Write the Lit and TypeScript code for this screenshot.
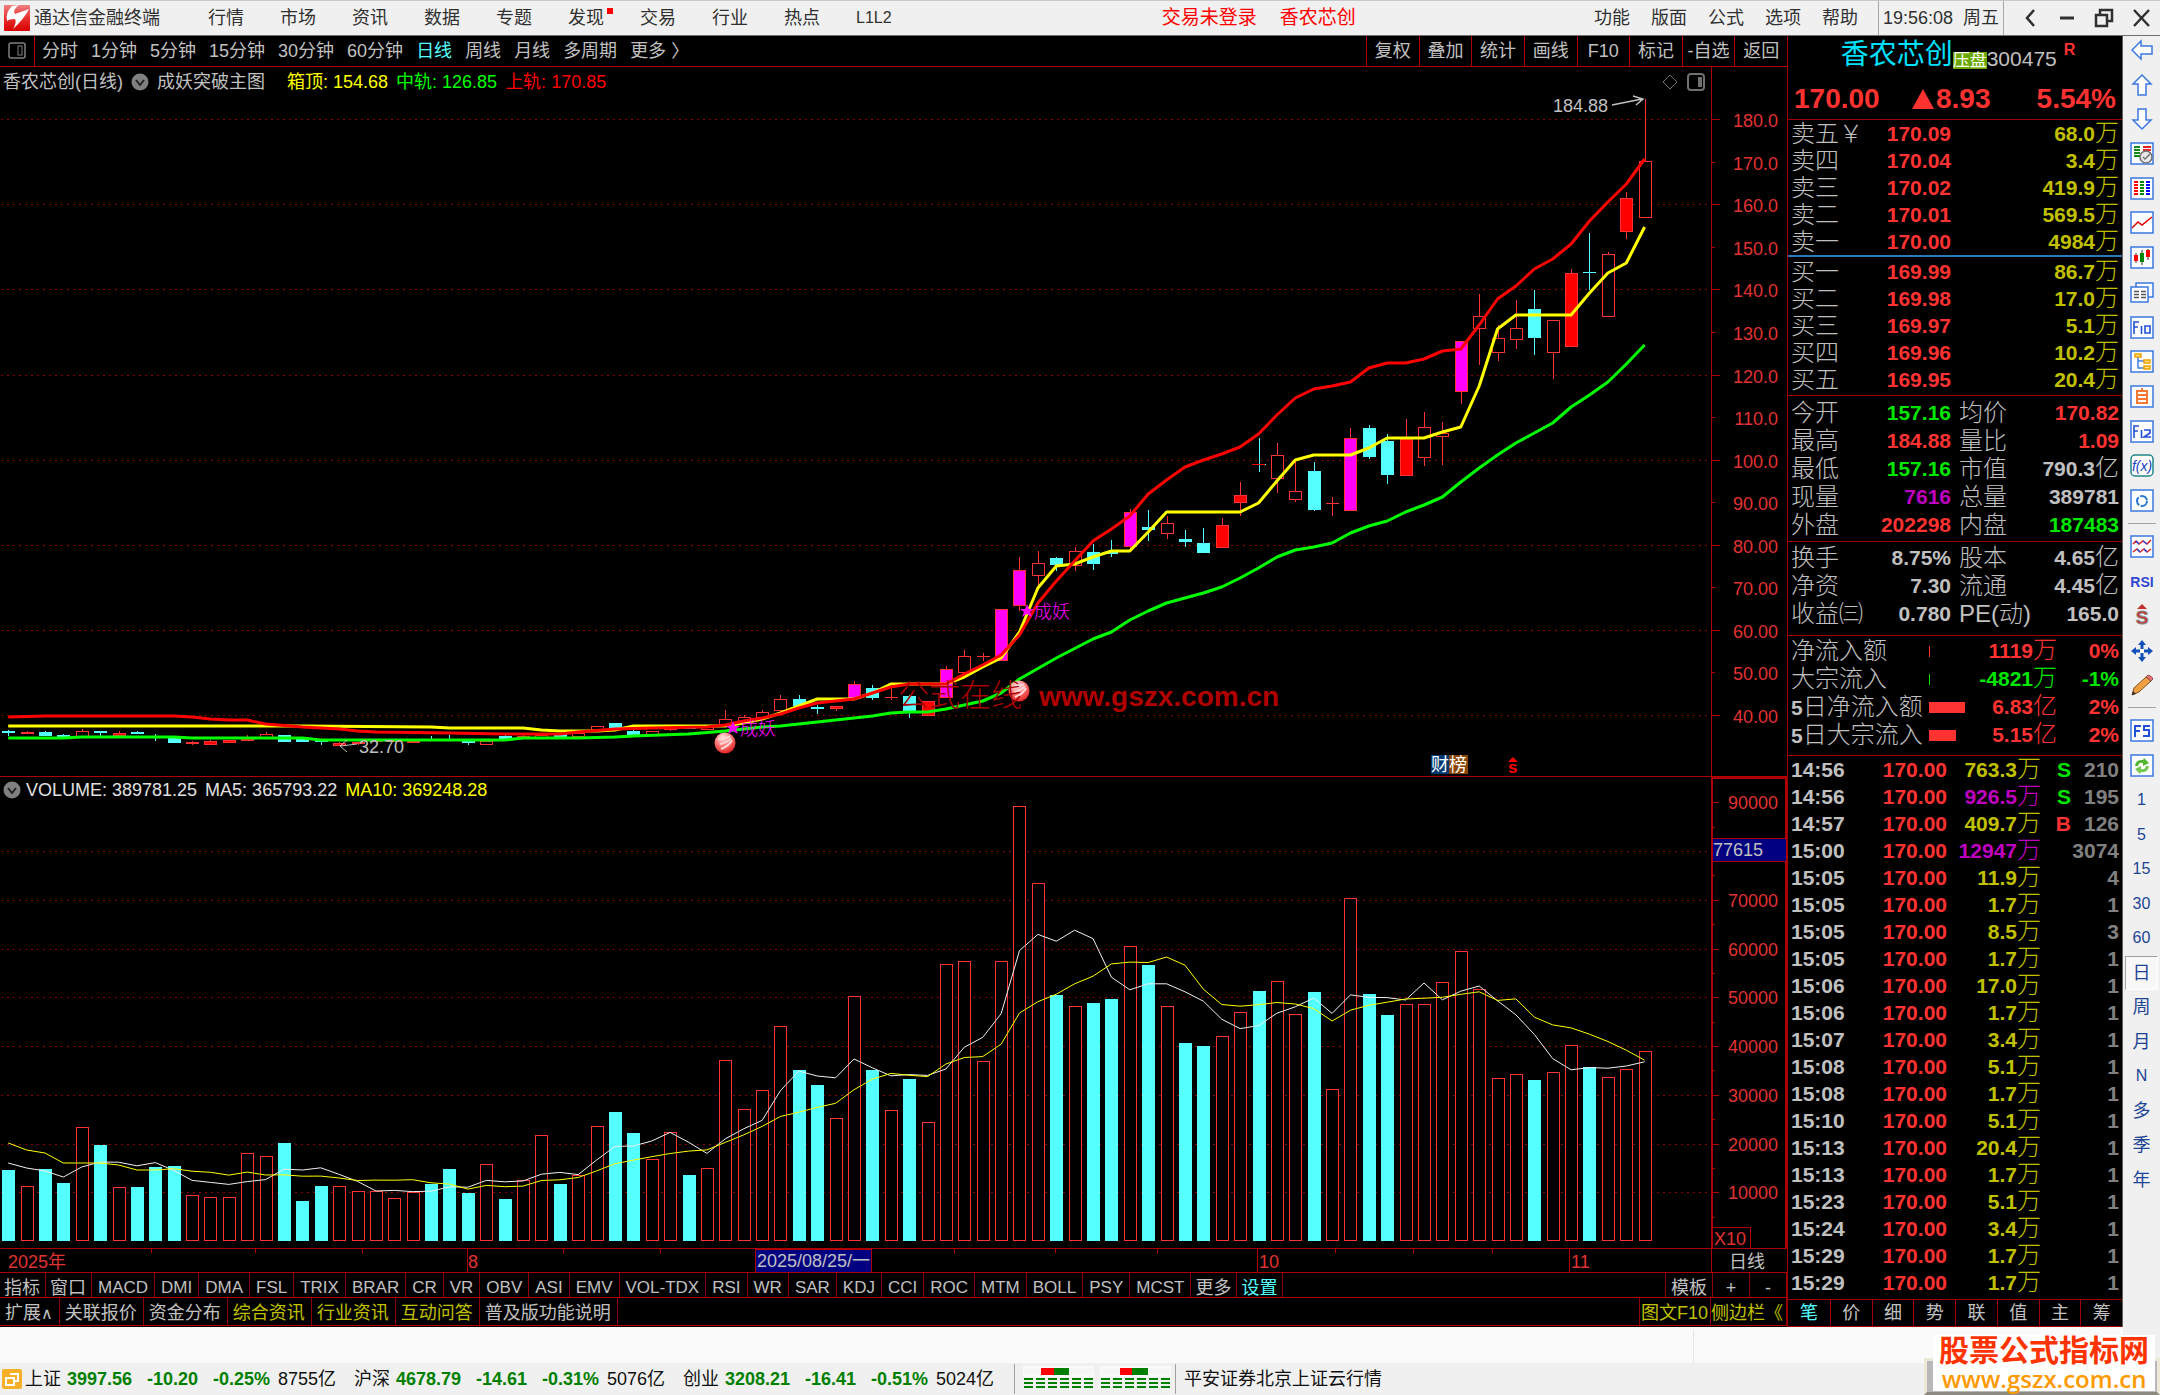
import { LitElement, html, svg, css, nothing } from "lit";
import { customElement, property } from "lit/decorators.js";
import { classMap } from "lit/directives/class-map.js";
import { styleMap } from "lit/directives/style-map.js";

const base = css`
  :host {
    display: block;
    font-family: "Liberation Sans", "Noto Sans CJK SC", sans-serif;
    font-size: 18px;
    line-height: 24px;
    color: #c0c0c0;
    white-space: nowrap;
  }
  * {
    box-sizing: border-box;
  }
  button {
    font: inherit;
    color: inherit;
    background: none;
    border: 0;
    padding: 0;
    margin: 0;
    line-height: inherit;
    white-space: nowrap;
  }
  svg {
    display: block;
  }
  .red { color: #ff3232; }
  .green { color: #00e600; }
  .yellow { color: #c0c000; }
  .cyan { color: #54ffff; }
  .magenta { color: #c000c0; }
  .gray { color: #808080; }
`;

const chartStyles = css`
  .stack { display: grid; }
  .stack > * { grid-area: 1 / 1; }
  .plot { width: 100%; height: auto; }
  .head {
    display: flex;
    align-items: center;
    align-self: start;
    height: 26px;
    z-index: 1;
  }
  .axis { stroke: #b00000; fill: none; shape-rendering: crispEdges; }
  .dots { stroke: #900000; stroke-dasharray: 2 4; shape-rendering: crispEdges; }
  .label { fill: #e03232; font-size: 18px; }
  .plain { fill: #c0c0c0; font-size: 18px; }
  .crisp { shape-rendering: crispEdges; }
  .trend { fill: none; stroke-width: 3; stroke-linejoin: round; }
  .thin { fill: none; stroke-width: 1; }
  .toggle { width: 18px; height: 18px; flex: none; }
`;

const STEP = 18.387;
const FIRST = 8.2;
const AXIS_X = 1711;
const barX = (i: number) => FIRST + i * STEP;

type Kind = "C" | "R" | "F" | "M";
/* kind, high, body top, body bottom, low; in chart units from the top of the window */
type Candle = [Kind, number, number, number, number];

const CANDLES: Candle[] = [
  ["C", 730, 731, 732, 735], ["F", 731, 732, 733, 733], ["C", 731, 732, 735, 735], ["C", 734, 735, 737, 737],
  ["R", 729, 731, 737, 737], ["C", 731, 731, 732, 735], ["F", 731, 733, 735, 735], ["C", 731, 732, 733, 733],
  ["C", 734, 736, 737, 740], ["C", 738, 738, 742, 742], ["F", 741, 742, 743, 744], ["F", 740, 741, 744, 744],
  ["F", 740, 740, 742, 742], ["F", 735, 738, 740, 740], ["R", 732, 734, 737, 737], ["C", 735, 735, 741, 741],
  ["C", 738, 738, 741, 741], ["C", 740, 740, 741, 744], ["F", 742, 743, 745, 745], ["F", 740, 742, 743, 744],
  ["F", 739, 739, 741, 741], ["F", 739, 740, 741, 741], ["F", 739, 741, 742, 742], ["C", 736, 739, 740, 740],
  ["C", 735, 739, 740, 740], ["C", 740, 741, 742, 744], ["R", 740, 741, 744, 744], ["C", 735, 736, 739, 739],
  ["R", 735, 736, 738, 738], ["R", 735, 735, 737, 737], ["C", 733, 734, 737, 737], ["R", 733, 733, 736, 736],
  ["R", 726, 726, 730, 730], ["C", 723, 723, 729, 729], ["C", 730, 731, 734, 734], ["R", 731, 731, 734, 734],
  ["F", 728, 728, 729, 730], ["C", 727, 727, 728, 728], ["R", 727, 727, 729, 729], ["R", 710, 719, 725, 725],
  ["R", 715, 717, 722, 722], ["R", 710, 712, 717, 717], ["R", 695, 699, 710, 710], ["C", 695, 699, 705, 705],
  ["C", 705, 707, 708, 713], ["F", 706, 706, 708, 710], ["M", 681, 684, 698, 698], ["C", 685, 688, 697, 699],
  ["F", 688, 697, 697, 699], ["C", 695, 696, 712, 717], ["F", 701, 701, 715, 715], ["M", 666, 669, 697, 697],
  ["R", 650, 656, 672, 672], ["F", 653, 656, 656, 660], ["M", 609, 609, 660, 660], ["M", 557, 570, 605, 610],
  ["R", 551, 563, 575, 588], ["C", 557, 558, 564, 570], ["R", 547, 551, 565, 570], ["C", 544, 552, 563, 569],
  ["C", 540, 552, 553, 556], ["M", 509, 512, 546, 548], ["C", 510, 527, 529, 540], ["R", 516, 523, 533, 538],
  ["C", 530, 539, 541, 546], ["C", 528, 543, 552, 552], ["F", 518, 525, 547, 547], ["F", 482, 495, 502, 515],
  ["C", 438, 464, 464, 471], ["R", 443, 455, 478, 492], ["R", 460, 491, 499, 501], ["C", 462, 471, 509, 510],
  ["F", 497, 503, 503, 515], ["M", 428, 438, 510, 510], ["C", 425, 428, 456, 458], ["C", 434, 441, 474, 483],
  ["F", 419, 438, 475, 475], ["R", 412, 427, 457, 465], ["R", 422, 433, 436, 464], ["M", 341, 341, 391, 403],
  ["R", 294, 316, 328, 364], ["R", 325, 338, 352, 360], ["R", 300, 328, 339, 348], ["C", 290, 309, 337, 354],
  ["R", 320, 320, 352, 378], ["F", 269, 273, 346, 346], ["C", 233, 272, 272, 289], ["R", 252, 254, 316, 316],
  ["F", 192, 198, 231, 238], ["R", 99, 161, 217, 217],
];

/* [bar index, level] knots of the three overlay lines */
const UPPER: [number, number][] = [
  [0, 717], [2, 716], [9, 716], [10, 717], [11, 719], [12, 720], [13, 720], [14, 724], [16, 727], [18, 729],
  [19, 731], [20, 732], [24, 733], [27, 734], [30, 734], [31, 732], [33, 729], [35, 728], [38, 727], [39, 725],
  [40, 721], [41, 718], [42, 714], [43, 708], [44, 703], [45, 701], [46, 699], [47, 693], [48, 687], [49, 684],
  [51, 684], [52, 674], [53, 665], [54, 655], [55, 635], [56, 603], [57, 581], [58, 561], [59, 541], [60, 529],
  [61, 516], [62, 494], [63, 480], [64, 467], [65, 460], [66, 454], [67, 447], [68, 434], [69, 415], [70, 398],
  [71, 389], [72, 386], [73, 382], [74, 368], [75, 363], [76, 363], [77, 359], [78, 351], [79, 349], [80, 325],
  [81, 299], [82, 286], [83, 269], [84, 259], [85, 244], [86, 221], [87, 202], [88, 184], [89, 159],
];
const BOX: [number, number][] = [
  [0, 726], [16, 726], [23, 727], [24, 728], [28, 728], [29, 730], [30, 731], [32, 731], [33, 730], [34, 726],
  [39, 726], [40, 723], [41, 719], [42, 713], [43, 706], [44, 699], [46, 699], [47, 693], [48, 684], [51, 684],
  [52, 677], [53, 667], [54, 658], [55, 632], [56, 588], [57, 566], [58, 564], [59, 557], [60, 551], [61, 551],
  [62, 532], [63, 512], [67, 512], [68, 503], [69, 481], [70, 460], [71, 455], [73, 455], [74, 448], [75, 438],
  [77, 438], [78, 432], [79, 427], [80, 386], [81, 329], [82, 315], [85, 315], [86, 293], [87, 273], [88, 263],
  [89, 227],
];
const MIDDLE: [number, number][] = [
  [0, 738], [3, 738], [4, 737], [9, 737], [10, 738], [16, 738], [17, 740], [27, 740], [28, 738], [31, 738],
  [33, 737], [34, 736], [37, 734], [39, 731], [40, 729], [41, 727], [42, 726], [43, 724], [44, 722], [45, 720],
  [46, 718], [47, 716], [48, 713], [49, 712], [50, 712], [51, 709], [52, 705], [53, 701], [54, 693], [55, 679],
  [57, 658], [59, 639], [60, 632], [61, 620], [62, 611], [63, 603], [65, 593], [66, 587], [67, 578], [68, 568],
  [69, 557], [70, 550], [71, 547], [72, 543], [73, 533], [74, 526], [75, 521], [76, 512], [77, 505], [78, 497],
  [79, 482], [80, 468], [81, 455], [82, 443], [83, 433], [84, 423], [85, 407], [86, 395], [87, 382], [88, 364],
  [89, 345],
];

const VOLUMES = [
  71, 55, 72, 58, 114, 96, 54, 54, 74, 75, 46, 44, 44, 88, 85, 98, 40, 55, 55, 50, 50, 43, 49, 57, 72, 48, 77, 42,
  61, 106, 57, 66, 115, 129, 108, 82, 109, 66, 73, 181, 132, 151, 215, 171, 156, 123, 245, 171, 131, 162, 119, 277,
  280, 180, 280, 435, 358, 246, 235, 238, 242, 295, 276, 235, 198, 195, 205, 229, 250, 260, 227, 249, 152, 343, 247,
  226, 237, 237, 259, 290, 252, 163, 167, 161, 169, 196, 174, 164, 172, 190,
];
const LEAD5 = [78, 73, 70, 64];
const LEAD10 = [98, 91, 88, 78, 78, 78, 76, 71, 71];

const average = (n: number, lead: number[]) =>
  VOLUMES.map((_, i) => (i < n - 1 ? lead[i] : VOLUMES.slice(i - n + 1, i + 1).reduce((a, b) => a + b, 0) / n));

const line = (pts: [number, number][]) => pts.map(([i, y]) => `${barX(i).toFixed(1)},${y.toFixed(1)}`).join(" ");

const toggleIcon = html`<svg class="toggle" viewBox="0 0 18 18" aria-hidden="true">
  <circle cx="9" cy="9" r="8.5" fill="#808080" />
  <path d="M5 7l4 5 4-5" fill="none" stroke="#202020" stroke-width="2" />
</svg>`;

@customElement("price-chart")
export class PriceChart extends LitElement {
  static styles = [
    base,
    chartStyles,
    css`
      .head { padding: 3px 82px 0 3px; gap: 8px; }
      .box { color: #ffff00; margin-left: 14px; }
      .mid { color: #00ff00; }
      .up { color: #ff0000; }
      .tools { margin-left: auto; display: flex; gap: 8px; }
      .stamp { fill: #a80000; font-size: 31px; font-family: "Liberation Serif", "Noto Sans CJK SC", serif; font-weight: 300; }
      .site { fill: #b00000; font-size: 28px; font-weight: 700; }
      .omen { fill: #ff00ff; font-size: 18px; font-weight: 300; }
      .badge { fill: #ffffff; font-size: 18px; }
      .dollar { fill: #ff0000; font-size: 17px; font-weight: 700; }
    `,
  ];

  private candle([kind, high, top, bottom, low]: Candle, i: number) {
    const cx = Math.round(barX(i));
    const stroke = kind === "C" ? "#54ffff" : "#ff3232";
    const fill = { C: "#54ffff", R: "#000000", F: "#ff0000", M: "#ff00ff" }[kind];
    return svg`
      <rect x=${cx} y=${high} width="1" height=${low - high + 1} fill=${stroke} />
      ${bottom === top
        ? svg`<rect x=${cx - 6} y=${top} width="13" height="1" fill=${stroke} />`
        : svg`<rect x=${cx - 5.5} y=${top + 0.5} width="12" height=${bottom - top} fill=${fill} stroke=${stroke} />`}`;
  }

  private ball(x: number, y: number) {
    return svg`
      <circle cx=${x} cy=${y} r="10.5" fill="url(#ball)" />
      <path d="M${x - 7} ${y - 4}q8 0 12-3M${x - 5} ${y + 1}q7-1 11-6M${x - 4} ${y + 6}q8-3 11-9"
        fill="none" stroke="#ffd8d8" stroke-width="2" />`;
  }

  private omen(x: number, y: number) {
    return svg`
      <path transform="translate(${x} ${y})" fill="#ff00ff" d="M0-7L2-2L7-2L3 1L5 6L0 3L-5 6L-3 1L-7-2L-2-2Z" />
      <text class="omen" x=${x + 7} y=${y + 7}>成妖</text>`;
  }

  render() {
    const level = (p: number) => Math.round(119.3 + (180 - p) * 4.254);
    const marks = Array.from({ length: 15 }, (_, k) => 180 - k * 10);
    return html`<div class="stack">
      <div class="head">
        <span>香农芯创(日线)</span>${toggleIcon}<span>成妖突破主图</span>
        <span class="box">箱顶: 154.68</span><span class="mid">中轨: 126.85</span><span class="up">上轨: 170.85</span>
        <span class="tools">
          <svg width="18" height="18" viewBox="0 0 18 18"><path d="M9 2l7 7-7 7-7-7z" fill="none" stroke="#707070" /></svg>
          <svg width="18" height="18" viewBox="0 0 18 18">
            <rect x="1" y="1" width="16" height="16" rx="3" fill="none" stroke="#707070" stroke-width="2" />
            <rect x="11" y="4" width="4" height="10" fill="#707070" />
          </svg>
        </span>
      </div>
      <svg class="plot" viewBox="0 67 1787 710" role="img" aria-label="日线">
        <defs>
          <radialGradient id="ball" cx="0.4" cy="0.25" r="0.8">
            <stop offset="0" stop-color="#ffe8e8" /><stop offset="0.45" stop-color="#ff8080" />
            <stop offset="1" stop-color="#e01818" />
          </radialGradient>
        </defs>
        ${marks.filter((p) => p % 20 === 0).map((p) => svg`<line class="dots" x1="1" x2=${AXIS_X} y1=${level(p) + 0.5} y2=${level(p) + 0.5} />`)}
        <g class="axis">
          <path d="M${AXIS_X}.5 67V777" />
          ${marks.map((p) => svg`<path d="M${AXIS_X} ${level(p)}.5h${p % 20 ? 4 : 9}" />`)}
        </g>
        ${marks.map((p) => svg`<text class="label" text-anchor="end" x="1778" y=${level(p) + 8}>${p >= 100 ? p.toFixed(1) : p.toFixed(2)}</text>`)}
        <g class="crisp">${CANDLES.map((c, i) => this.candle(c, i))}
          <rect x="1252" y="464" width="13" height="1" fill="#ff0000" />
        </g>
        <polyline class="trend" stroke="#ffff00" points=${line(BOX)} />
        <polyline class="trend" stroke="#ff0000" points=${line(UPPER)} />
        <polyline class="trend" stroke="#00ff00" points=${line(MIDDLE)} />
        ${this.ball(725, 743)} ${this.ball(1019, 691)} ${this.omen(733, 728)} ${this.omen(1027, 611)}
        <text class="stamp" x="898" y="706">公式在线</text>
        <text class="site" x="1039" y="706">www.gszx.com.cn</text>
        <text class="plain" x="359" y="753">32.70</text>
        <path d="M357 744L341 746M347 740L340 746L347 752" fill="none" stroke="#c0c0c0" />
        <text class="plain" x="1553" y="112">184.88</text>
        <path d="M1612 105L1642 99M1633 96L1643 99L1636 105" fill="none" stroke="#c0c0c0" stroke-width="1.5" />
        <rect x="1431" y="755" width="18" height="19" fill="#003870" />
        <rect x="1449" y="755" width="19" height="19" fill="#884400" />
        <text class="badge" x="1431" y="771">财榜</text>
        <path d="M1508 762l5-5 5 5z" fill="#ff0000" />
        <text class="dollar" x="1508" y="773">s</text>
        <path class="axis" d="M0 776.5H1787" />
      </svg>
    </div>`;
  }
}

@customElement("volume-chart")
export class VolumeChart extends LitElement {
  static styles = [
    base,
    chartStyles,
    css`
      .head { padding: 0 3px; gap: 5px; color: #e0e0e0; }
      .ten { color: #ffff00; margin-left: 3px; }
      .five { margin-left: 3px; }
    `,
  ];

  render() {
    const level = (v: number) => Math.round(1241 - v * 48.75);
    const grid = [1, 2, 3, 4, 5, 6, 7, 8];
    const ma = (n: number, lead: number[]) => line(average(n, lead).map((v, i) => [i, 1241 - v]));
    return html`<div class="stack">
      <div class="head">
        ${toggleIcon}<span>VOLUME: 389781.25</span><span class="five">MA5: 365793.22</span>
        <span class="ten">MA10: 369248.28</span>
      </div>
      <svg class="plot" viewBox="0 777 1787 472" role="img" aria-label="VOLUME">
        ${grid.map((v) => svg`<line class="dots" x1="1" x2=${AXIS_X} y1=${level(v) + 0.5} y2=${level(v) + 0.5} />`)}
        <g class="axis">
          <path stroke-width="2" d="M${AXIS_X + 1} 777V1248M1786 777V1248M1711 778H1787M0 1249H1787" />
          ${[...grid, 9].map((v) => svg`<path d="M${AXIS_X} ${level(v)}.5h8M${AXIS_X} ${level(v - 0.5)}.5h4" />`)}
          <path d="M1712 1227.5h38.5V1249" />
        </g>
        ${[...grid, 9].filter((v) => v !== 8).map((v) => svg`<text class="label" text-anchor="end" x="1778" y=${level(v) + 7}>${v * 10000}</text>`)}
        <rect class="crisp" x="1712" y="838.5" width="74" height="23" fill="#000080" stroke="#b00000" />
        <text class="plain" x="1713" y="856">77615</text>
        <text class="label" x="1714" y="1245">X10</text>
        <g class="crisp">
          ${VOLUMES.map((v, i) => {
            const x = Math.round(barX(i)) - 6;
            return CANDLES[i][0] === "C"
              ? svg`<rect x=${x} y=${1241 - v} width="13" height=${v} fill="#54ffff" />`
              : svg`<rect x=${x + 0.5} y=${1241.5 - v} width="12" height=${v - 1} fill="#000000" stroke="#ff3232" />`;
          })}
        </g>
        <polyline class="thin" stroke="#f0f0f0" points=${ma(5, LEAD5)} />
        <polyline class="thin" stroke="#ffff00" points=${ma(10, LEAD10)} />
      </svg>
    </div>`;
  }
}

@customElement("date-axis")
export class DateAxis extends LitElement {
  static styles = [base, chartStyles];
  render() {
    const minor = [151, 255, 362, 563, 660, 954, 1055, 1157, 1335, 1413, 1492];
    return html`<svg class="plot" viewBox="0 0 1787 24" role="img" aria-label="日期">
      <g class="axis">
        <path d="M467.5 0V24M1257.5 0V24M1569.5 0V24M${AXIS_X}.5 0V24M0 23.5H1787" />
        ${minor.map((x) => svg`<path d="M${x}.5 0v4" />`)}
      </g>
      <rect class="crisp" x="755.5" y="0.5" width="116" height="23" fill="#000080" stroke="#b00000" />
      <text class="label" x="8" y="19">2025年</text>
      <text class="label" x="468" y="19">8</text>
      <text class="plain" x="757" y="18">2025/08/25/一</text>
      <text class="label" x="1259" y="19">10</text>
      <text class="label" x="1571" y="19">11</text>
      <text class="plain" x="1747" y="19" text-anchor="middle">日线</text>
    </svg>`;
  }
}

const SELL = [["卖五￥", "170.09", "68.0"], ["卖四", "170.04", "3.4"], ["卖三", "170.02", "419.9"], ["卖二", "170.01", "569.5"], ["卖一", "170.00", "4984"]];
const BUY = [["买一", "169.99", "86.7"], ["买二", "169.98", "17.0"], ["买三", "169.97", "5.1"], ["买四", "169.96", "10.2"], ["买五", "169.95", "20.4"]];
const DAY = [
  ["今开", "157.16", "green", "均价", "170.82", "red"],
  ["最高", "184.88", "red", "量比", "1.09", "red"],
  ["最低", "157.16", "green", "市值", "790.3亿", ""],
  ["现量", "7616", "magenta", "总量", "389781", ""],
  ["外盘", "202298", "red", "内盘", "187483", "green"],
];
const BASICS = [
  ["换手", "8.75%", "", "股本", "4.65亿", ""],
  ["净资", "7.30", "", "流通", "4.45亿", ""],
  ["收益㈢", "0.780", "", "PE(动)", "165.0", ""],
];
const FLOWS: [string, number, string, string, string][] = [
  ["净流入额", 1, "1119万", "0%", "red"],
  ["大宗流入", 1, "-4821万", "-1%", "green"],
  ["5日净流入额", 36, "6.83亿", "2%", "red"],
  ["5日大宗流入", 27, "5.15亿", "2%", "red"],
];
const TICKS: [string, string, string, string, string][] = [
  ["14:56", "763.3", "yellow", "S", "210"], ["14:56", "926.5", "magenta", "S", "195"],
  ["14:57", "409.7", "yellow", "B", "126"], ["15:00", "12947", "magenta", "", "3074"],
  ["15:05", "11.9", "yellow", "", "4"], ["15:05", "1.7", "yellow", "", "1"],
  ["15:05", "8.5", "yellow", "", "3"], ["15:05", "1.7", "yellow", "", "1"],
  ["15:06", "17.0", "yellow", "", "1"], ["15:06", "1.7", "yellow", "", "1"],
  ["15:07", "3.4", "yellow", "", "1"], ["15:08", "5.1", "yellow", "", "1"],
  ["15:08", "1.7", "yellow", "", "1"], ["15:10", "5.1", "yellow", "", "1"],
  ["15:13", "20.4", "yellow", "", "1"], ["15:13", "1.7", "yellow", "", "1"],
  ["15:23", "5.1", "yellow", "", "1"], ["15:24", "3.4", "yellow", "", "1"],
  ["15:29", "1.7", "yellow", "", "1"], ["15:29", "1.7", "yellow", "", "1"],
];

/* Splits a figure from its trailing 万 / 亿 unit so the unit keeps the lighter weight. */
const figure = (t: string) => {
  const m = /^(.*?)([万亿]?)$/.exec(t)!;
  return html`<b>${m[1]}</b>${m[2] ? html`<i>${m[2]}</i>` : nothing}`;
};

@customElement("quote-panel")
export class QuotePanel extends LitElement {
  static styles = [
    base,
    css`
      :host {
        display: flex;
        flex-direction: column;
        border-left: 1px solid #a00000;
        border-right: 1px solid #606060;
        background: #000;
        font-size: 21px;
      }
      .name { display: flex; justify-content: center; align-items: flex-start; height: 42px; padding-left: 6px; }
      .title { color: #00e0ff; font-size: 28px; line-height: 38px; }
      .tag { background: #6aa800; color: #fff; font-size: 17px; line-height: 17px; margin-top: 16px; }
      .code { line-height: 46px; }
      .flag { font-size: 16px; font-weight: 700; line-height: 28px; margin-left: 7px; }
      .price { display: grid; grid-template-columns: 118px 1fr auto; align-items: center; height: 41px; padding: 0 6px; font-size: 28px; font-weight: 700; }
      .up { display: flex; align-items: center; gap: 2px; }
      table { border-collapse: collapse; width: 100%; table-layout: fixed; }
      td, th { padding: 0; height: 27px; line-height: 27px; text-align: right; font-weight: 400; }
      .tall td, .tall th { height: 28px; line-height: 28px; }
      th, i { font-size: 24px; font-weight: 300; font-style: normal; }
      th { text-align: left; }
      b { font-weight: 700; }
      b, i, .num { line-height: 0; }
      section { border-top: 1px solid #a00000; padding: 0 3px; }
      .buys { border-top: 2px solid #2a78b8; padding-top: 1px; padding-bottom: 2px; }
      .day { padding-top: 3px; padding-bottom: 2px; }
      .basics { padding-top: 2px; padding-bottom: 7px; }
      .flows { padding-top: 1px; padding-bottom: 6px; }
      .ticks { flex: 1; padding-bottom: 3px; }
      .second { padding-left: 8px; }
      .num { font-size: 21px; font-weight: 700; }
      .tone { color: #c0c0c0; }
      .bar { display: block; height: 11px; background: currentColor; }
      .time { text-align: left; font-weight: 700; }
      .side { font-weight: 700; text-align: right; }
      .views { display: grid; grid-template-columns: repeat(8, 1fr); height: 28px; border-top: 1px solid #a00000; border-bottom: 1px solid #a00000; font-size: 18px; }
      .views button + button { border-left: 1px solid #a00000; }
      .c-label { width: 75px; }
      .c-first { width: 85px; }
      .c-pair { width: 76px; }
      .c-flow { width: 138px; }
      .c-bar { width: 40px; }
      .c-pct { width: 62px; }
      .c-time { width: 60px; }
      .c-deal { width: 96px; }
      .c-amount { width: 94px; }
      .c-side { width: 30px; }
    `,
  ];

  private book(rows: string[][]) {
    return html`<table>
      <colgroup><col class="c-label" /><col class="c-first" /><col /></colgroup>
      ${rows.map(([n, p, v]) => html`<tr><th scope="row">${n}</th><td class="red"><b>${p}</b></td><td class="yellow">${figure(v + "万")}</td></tr>`)}
    </table>`;
  }

  private pairs(rows: string[][]) {
    return html`<table class="tall">
      <colgroup><col class="c-label" /><col class="c-first" /><col class="c-pair" /><col /></colgroup>
      ${rows.map(([a, b, c, d, e, f]) => html`<tr><th scope="row">${a}</th><td class=${c}>${figure(b)}</td><th scope="row" class="second">${d}</th><td class=${f}>${figure(e)}</td></tr>`)}
    </table>`;
  }

  render() {
    return html`
      <div class="name">
        <span class="title">香农芯创</span><span class="tag">压盘</span><span class="code">300475</span><span class="flag red">R</span>
      </div>
      <div class="price red">
        <span>170.00</span>
        <span class="up"><svg width="22" height="20" viewBox="0 0 22 20"><path d="M11 0L22 20H0z" fill="currentColor" /></svg>8.93</span>
        <span>5.54%</span>
      </div>
      <section>${this.book(SELL)}</section>
      <section class="buys">${this.book(BUY)}</section>
      <section class="day">${this.pairs(DAY)}</section>
      <section class="basics">${this.pairs(BASICS)}</section>
      <section class="flows">
        <table class="tall">
          <colgroup><col class="c-flow" /><col class="c-bar" /><col /><col class="c-pct" /></colgroup>
          ${FLOWS.map(([n, w, v, p, c]) => html`<tr class=${c}>
            <th scope="row" class="tone">${n.startsWith("5") ? html`<span class="num">5</span>${n.slice(1)}` : n}</th>
            <td><span class="bar" style=${styleMap({ width: `${w}px` })}></span></td>
            <td>${figure(v)}</td><td><b>${p}</b></td>
          </tr>`)}
        </table>
      </section>
      <section class="ticks">
        <table>
          <colgroup><col class="c-time" /><col class="c-deal" /><col class="c-amount" /><col class="c-side" /><col /></colgroup>
          ${TICKS.map(([t, v, c, s, n]) => html`<tr>
            <td class="time">${t}</td><td class="red"><b>170.00</b></td><td class=${c}>${figure(v + "万")}</td>
            <td class="side ${s === "S" ? "green" : "red"}">${s}</td><td class="gray"><b>${n}</b></td>
          </tr>`)}
        </table>
      </section>
      <div class="views">
        ${[..."笔价细势联值主筹"].map((t, i) => html`<button class=${classMap({ cyan: i === 0 })}>${t}</button>`)}
      </div>`;
  }
}

const framed = (inner: unknown, stroke = "#3c78e0") => svg`<rect x="1" y="1" width="22" height="21" fill="#fff" stroke=${stroke} stroke-width="1.5" />${inner}`;
const arrow = (deg: number) => svg`<path transform="rotate(${deg} 12 12)" d="M2 12L11 3V8H22V16H11V21Z" fill="#fff" stroke="#3c78e0" stroke-width="1.5" />`;
const dashes = (x: number, w: number, color: string, rows: number[]) => rows.map((y) => svg`<rect x=${x} y=${y} width=${w} height="2" fill=${color} />`);
const FIVE = [4, 7, 10, 13, 16];

const TOP_ICONS: [string, unknown][] = [
  ["返回", arrow(0)],
  ["向上", arrow(90)],
  ["向下", arrow(-90)],
  ["报价", framed([dashes(4, 6, "#108a10", [4, 7, 10, 13]), dashes(13, 8, "#e82020", [4, 7, 10]), svg`<circle cx="16" cy="15" r="6" fill="#e8e8e8" stroke="#707070" stroke-width="1.5" /><path d="M13 15l2 2 5-5" fill="none" stroke="#707070" stroke-width="1.5" />`])],
  ["列表", framed([dashes(4, 4, "#f00", FIVE), dashes(10, 4, "#080", FIVE), dashes(16, 4, "#00f", FIVE)])],
  ["分时图", framed(svg`<path d="M2 17L8 11L12 14L22 6" fill="none" stroke="#e00000" stroke-width="1.5" />`)],
  ["K线图", framed(svg`<path d="M6 7v10M12 4v15M18 3v11" stroke="#333" /><rect x="4" y="9" width="4" height="6" fill="#f00" /><rect x="10" y="7" width="4" height="9" fill="#080" /><rect x="16" y="4" width="4" height="7" fill="#f00" />`)],
  ["多窗口", svg`<rect x="6" y="2" width="17" height="14" fill="#fff" stroke="#3c78e0" stroke-width="1.5" /><rect x="1" y="6" width="17" height="15" fill="#fff" stroke="#3c78e0" stroke-width="1.5" /><path d="M4 10.500H9M4 13.500H9M4 16.500H9M11 10.500H16M11 13.500H16M11 16.500H16" stroke="#555" stroke-width="1.300" />`],
  ["F10", framed(svg`<path d="M4 18V6H9M4 11H8M11.5 10V18M15 10H20V17H15Z" fill="none" stroke="#2050d8" stroke-width="1.6" />`)],
  ["树形", framed(svg`<path d="M8 7V18H15M8 11H15" fill="none" stroke="#4080e0" stroke-width="1.5" /><rect x="5" y="4" width="6" height="3" fill="#ffe080" stroke="#f0a000" stroke-width="1.5" /><rect x="14" y="10" width="6" height="3" fill="#ffe080" stroke="#f0a000" stroke-width="1.5" /><rect x="14" y="16" width="6" height="3" fill="#ffe080" stroke="#f0a000" stroke-width="1.5" />`)],
  ["自选", framed(svg`<rect x="7" y="6" width="10" height="12" fill="none" stroke="#f87830" stroke-width="2" /><path d="M7 10H17M7 14H17M12 6V3" stroke="#f87830" stroke-width="2" />`)],
  ["F12", framed(svg`<path d="M4 18V6H9M4 11H8M11.5 10V18M14 10H20V13L14 17H21" fill="none" stroke="#2050d8" stroke-width="1.6" />`)],
  ["公式", svg`<rect x="1" y="1" width="22" height="21" rx="4" fill="#fff" stroke="#208888" stroke-width="1.5" /><text x="12" y="17" font-size="14" font-style="italic" text-anchor="middle" fill="#2040c0">f(x)</text>`],
  ["圆", framed(svg`<circle cx="12" cy="12" r="5" fill="none" stroke="#2878d0" stroke-width="2" stroke-dasharray="9 1.5" />`)],
];

const MID_ICONS: [string, unknown][] = [
  ["指标", framed(svg`<path d="M3 9L6 6L9 9L13 6L17 9L21 5" fill="none" stroke="#e02020" stroke-width="1.5" /><path d="M3 17L7 14L10 17L14 14L17 17L21 14" fill="none" stroke="#e02020" stroke-width="1.5" /><path d="M7 14L10 17M14 14L17 17M6 6L9 9M13 6L17 9" stroke="#3050e0" stroke-width="1.5" />`)],
  ["RSI", svg`<text x="12" y="17" font-size="14" font-weight="700" text-anchor="middle" fill="#3048d0">RSI</text>`],
  ["资金", svg`<path d="M7 5L12 0L17 5Z" fill="#c03030" /><text x="12" y="20" font-size="19" font-weight="700" text-anchor="middle" fill="#c82828" stroke="#909090" stroke-width="1">S</text>`],
  ["移动", svg`<path d="M12 1L16 6H8ZM12 23L16 18H8ZM1 12L6 8V16ZM23 12L18 8V16Z" fill="#1050b8" /><path d="M12 5V19M5 12H19" stroke="#1050b8" stroke-width="3" /><rect x="10" y="10" width="4" height="4" fill="#fff" />`],
  ["画笔", svg`<path d="M2 22L4 15L16 4L21 8L9 19Z" fill="#f0a040" stroke="#805020" /><path d="M16 4L18 2Q22 3 23 6L21 8Z" fill="#e87070" stroke="#905050" /><path d="M2 22L3 18L6 21Z" fill="#303030" />`],
];

const LOW_ICONS: [string, unknown][] = [
  ["F5", framed(svg`<path d="M5 18V7H11M5 12H10M20 7H14V11H19V17H13" fill="none" stroke="#2050d8" stroke-width="2" />`)],
  ["刷新", framed(svg`<path d="M5 12Q6 5 13 6L14 4L19 9L13 12L13 9Q9 8 8 12Z" fill="#50b830" /><path d="M19 12Q18 19 11 18L10 20L5 15L11 12L11 15Q15 16 16 12Z" fill="#70c850" />`)],
];

@customElement("tool-strip")
export class ToolStrip extends LitElement {
  static styles = [
    base,
    css`
      :host { background: #f0f0f0; padding-top: 2px; color: #1c4494; }
      .group { display: flex; flex-direction: column; justify-content: space-between; align-items: center; }
      .top { height: 475px; }
      .mid { height: 162px; }
      .low { height: 473px; }
      hr { border: 0; border-top: 1px solid #a0a0a0; margin: 10px 4px 11px 5px; }
      button { height: 24px; font-size: 16px; line-height: 24px; }
      .cjk { font-size: 18px; }
      .on { width: 33px; height: 34px; margin: -5px 0; background: #f8f8f8; border: 1px solid #fff; border-top-color: #a0a0a0; border-left-color: #a0a0a0; }
    `,
  ];
  private icons(list: [string, unknown][]) {
    return list.map(([name, art]) => html`<button aria-label=${name}><svg width="24" height="24" viewBox="0 0 24 24">${art}</svg></button>`);
  }
  render() {
    return html`
      <div class="group top">${this.icons(TOP_ICONS)}</div>
      <hr />
      <div class="group mid">${this.icons(MID_ICONS)}</div>
      <hr />
      <div class="group low">
        ${this.icons(LOW_ICONS)}
        ${["1", "5", "15", "30", "60", "日", "周", "月", "N", "多", "季", "年"].map(
          (t) => html`<button class=${classMap({ cjk: t > "Z", on: t === "日" })}>${t}</button>`,
        )}
      </div>`;
  }
}

@customElement("market-bars")
export class MarketBars extends LitElement {
  static styles = [base, css`:host { flex: none; }`];
  @property({ type: Number }) red = 18;
  @property({ type: Number }) mid = 31;
  @property({ type: Number }) end = 46;
  render() {
    return html`<svg width="71" height="26" viewBox="0 0 71 26" aria-hidden="true">
      <rect x="0" y="3" width="71" height="9" fill="#f6f6f6" stroke="#fff" />
      <rect x=${this.red} y="4" width=${this.mid - this.red} height="7" fill="#ff0000" />
      <rect x=${this.mid} y="4" width=${this.end - this.mid} height="7" fill="#008000" />
      ${[14, 18, 22].map((y) => [0, 1, 2, 3, 4, 5].map((k) => svg`<rect x=${1 + k * 12} y=${y} width="9" height="2" fill="#008000" />`))}
    </svg>`;
  }
}

const MENU = ["行情", "市场", "资讯", "数据", "专题", "发现", "交易", "行业", "热点", "L1L2"];
const PERIODS = ["分时", "1分钟", "5分钟", "15分钟", "30分钟", "60分钟", "日线", "周线", "月线", "多周期", "更多 〉"];
const ACTIONS = ["复权", "叠加", "统计", "画线", "F10", "标记", "-自选", "返回"];
const INDICATORS = ["指标", "窗口", "MACD", "DMI", "DMA", "FSL", "TRIX", "BRAR", "CR", "VR", "OBV", "ASI", "EMV", "VOL-TDX", "RSI", "WR", "SAR", "KDJ", "CCI", "ROC", "MTM", "BOLL", "PSY", "MCST", "更多", "设置"];
const EXTRAS = ["关联报价", "资金分布", "综合资讯", "行业资讯", "互动问答", "普及版功能说明"];
const INDEXES = [
  ["上证", "3997.56", "-10.20", "-0.25%", "8755亿"],
  ["沪深", "4678.79", "-14.61", "-0.31%", "5076亿"],
  ["创业", "3208.21", "-16.41", "-0.51%", "5024亿"],
];

@customElement("app-root")
export class AppRoot extends LitElement {
  static styles = [
    base,
    css`
      :host { position: relative; background: #f0f0f0; border-bottom: 1px solid #1a2433; }
      .titlebar { display: flex; align-items: center; height: 36px; padding: 0 7px 0 4px; background: #f0f0f0; color: #303030; border-top: 1px solid #c8c8c8; border-bottom: 1px solid #707070; }
      .logo { width: 26px; height: 26px; margin-right: 4px; flex: none; }
      .brand { width: 174px; }
      .menu { display: flex; gap: 36px; }
      .menu button { position: relative; }
      .short { font-size: 16px; }
      .dot { position: absolute; right: -9px; top: 2px; width: 6px; height: 6px; background: #ff0000; }
      .login { margin: 0 auto; padding-left: 32px; display: flex; gap: 23px; color: #ff0000; font-size: 19px; }
      .system { display: flex; gap: 21px; margin-right: 20px; }
      .clock { display: flex; gap: 10px; height: 34px; line-height: 34px; padding: 0 4px; border: solid #a8a8a8; border-width: 0 1px; }
      .window { display: flex; gap: 13px; margin-left: 14px; }
      .work { display: grid; grid-template-columns: minmax(0, 1fr) 37px; }
      .left { min-width: 0; }
      .desk { display: grid; grid-template-columns: minmax(0, 1fr) 336px; background: #000; }
      .periods { display: flex; align-items: center; height: 31px; border-bottom: 1px solid #b00000; line-height: 30px; }
      .layout { width: 35px; height: 30px; display: grid; place-items: center; border-right: 1px solid #b00000; }
      .spans { display: flex; gap: 13px; margin-left: 7px; }
      .actions { display: grid; grid-template-columns: repeat(8, 1fr); width: 421px; margin-left: auto; height: 30px; }
      .actions button { border-left: 1px solid #b00000; }
      .tabs { display: flex; height: 25px; border-bottom: 1px solid #b00000; }
      .tabs button { padding: 3px 6px 0; border-right: 1px solid #900000; }
      .tabs .latin { font-size: 17px; }
      .tabs .cjk { padding: 3px 5px 0 4px; }
      .tabs .template { margin-left: auto; border-left: 1px solid #900000; padding: 3px 5px 0; }
      .tabs .step { width: 37px; }
      .extras { height: 28px; }
      .extras button { padding: 3px 6px 0 5px; }
      .caret { font-family: "DejaVu Sans", sans-serif; font-size: 16px; line-height: 0; }
      .extras .doc { margin-left: auto; border-left: 1px solid #900000; padding: 3px 2px 0 1px; }
      .extras .rail { padding: 3px 0 0; width: 76px; text-align: left; }
      .ticker { display: flex; justify-content: flex-end; height: 36px; background: #fafafa; }
      .ticker span { border-left: 1px solid #e8e8e8; width: 430px; margin-top: 3px; }
      .status { display: flex; align-items: center; height: 32px; color: #101010; padding-left: 2px; }
      .folder { margin-right: 3px; flex: none; }
      .index { display: grid; grid-template-columns: 42px 80px 66px 65px 76px; }
      .index b { color: #008000; }
      .bars { display: flex; gap: 6px; margin-left: 2px; padding: 0 4px 0 8px; height: 30px; border: solid #a0a0a0; border-width: 0 1px; }
      .server { margin-left: 8px; }
      .badge { position: absolute; right: 0; bottom: 0; width: 236px; height: 60px; display: flex; flex-direction: column; align-items: center; text-decoration: none; }
      .badge::before { content: ""; position: absolute; inset: 23px 0 0 0; background: #b8b8b8; border: 3px solid #ece9d8; border-bottom-color: #8c8a80; z-index: 0; }
      .card { position: relative; z-index: 1; width: 222px; height: 56px; background: #fff; margin-left: 4px; text-align: center; }
      .site-name { display: block; font-size: 30px; line-height: 32px; font-weight: 700; color: #ff3300; }
      .site-url { display: block; font-family: "Open Sans", sans-serif; font-size: 24px; line-height: 24px; font-weight: 600; color: #ff9900; }
    `,
  ];

  render() {
    return html`
      <header class="titlebar">
        <svg class="logo" viewBox="0 0 26 26" aria-hidden="true">
          <defs><linearGradient id="lg" x1="0" y1="0" x2="0" y2="1"><stop offset="0" stop-color="#f08080" /><stop offset="0.5" stop-color="#e83030" /><stop offset="1" stop-color="#d80000" /></linearGradient></defs>
          <rect width="26" height="26" rx="1" fill="url(#lg)" />
          <path d="M8 1L15 0Q8 5 11 9L25 4Q20 14 9 24Q13 17 11 14Q5 14 3 16Q1 8 8 1Z" fill="#fff" />
        </svg>
        <span class="brand">通达信金融终端</span>
        <nav class="menu">
          ${MENU.map((t) => html`<button class=${classMap({ short: t === "L1L2" })}>${t}${t === "发现" ? html`<span class="dot"></span>` : nothing}</button>`)}
        </nav>
        <div class="login"><button>交易未登录</button><button>香农芯创</button></div>
        <nav class="system">${["功能", "版面", "公式", "选项", "帮助"].map((t) => html`<button>${t}</button>`)}</nav>
        <div class="clock"><time>19:56:08</time><span>周五</span></div>
        <div class="window">
          <button aria-label="后退"><svg width="24" height="24" viewBox="0 0 24 24"><path d="M16 4L9 12L16 20" fill="none" stroke="#303030" stroke-width="2.5" /></svg></button>
          <button aria-label="最小化"><svg width="24" height="24" viewBox="0 0 24 24"><path d="M5 12H19" stroke="#303030" stroke-width="3" /></svg></button>
          <button aria-label="还原"><svg width="24" height="24" viewBox="0 0 24 24"><path d="M4 9H15V20H4ZM8 9V4H20V15H15" fill="none" stroke="#303030" stroke-width="2.5" /></svg></button>
          <button aria-label="关闭"><svg width="24" height="24" viewBox="0 0 24 24"><path d="M5 4L20 20M20 4L5 20" stroke="#303030" stroke-width="2.5" /></svg></button>
        </div>
      </header>
      <div class="work">
        <div class="left">
          <main class="desk">
            <div class="left">
              <div class="periods">
                <button class="layout" aria-label="布局"><svg width="20" height="18" viewBox="0 0 20 18"><rect x="2" y="1" width="16" height="15" rx="2" fill="none" stroke="#808080" stroke-width="1.5" /><rect x="11" y="4" width="4" height="9" fill="none" stroke="#808080" /></svg></button>
                <nav class="spans">${PERIODS.map((t) => html`<button class=${classMap({ cyan: t === "日线" })}>${t}</button>`)}</nav>
                <div class="actions">${ACTIONS.map((t) => html`<button>${t}</button>`)}</div>
              </div>
              <price-chart></price-chart>
              <volume-chart></volume-chart>
              <date-axis></date-axis>
              <div class="tabs">
                ${INDICATORS.map((t) => html`<button class=${classMap({ latin: t < "a", cjk: t > "a", cyan: t === "设置" })}>${t}</button>`)}
                <button class="template">模板</button><button class="step">+</button><button class="step">-</button>
              </div>
              <div class="tabs extras">
                <button>扩展<span class="caret">∧</span></button>
                ${EXTRAS.map((t, i) => html`<button class=${classMap({ yellow: i > 1 && i < 5 })}>${t}</button>`)}
                <button class="doc yellow">图文F10</button><button class="rail yellow">侧边栏《</button>
              </div>
            </div>
            <quote-panel></quote-panel>
          </main>
          <div class="ticker"><span></span></div>
        </div>
        <tool-strip></tool-strip>
      </div>
      <footer class="status">
        <svg class="folder" width="20" height="20" viewBox="0 0 20 20" aria-hidden="true">
          <rect width="20" height="20" rx="2" fill="#f8b028" />
          <path d="M8 5H16V12H12M4 9H12V16H4Z" fill="none" stroke="#fff" stroke-width="2" />
        </svg>
        ${INDEXES.map(([n, v, c, p, a]) => html`<span class="index"><span>${n}</span><b>${v}</b><b>${c}</b><b>${p}</b><span>${a}</span></span>`)}
        <div class="bars"><market-bars></market-bars><market-bars .red=${20} .mid=${32} .end=${48}></market-bars></div>
        <span class="server">平安证券北京上证云行情</span>
      </footer>
      <a class="badge" href="http://www.gszx.com.cn"><span class="card"><span class="site-name">股票公式指标网</span><span class="site-url">www.gszx.com.cn</span></span></a>
    `;
  }
}
